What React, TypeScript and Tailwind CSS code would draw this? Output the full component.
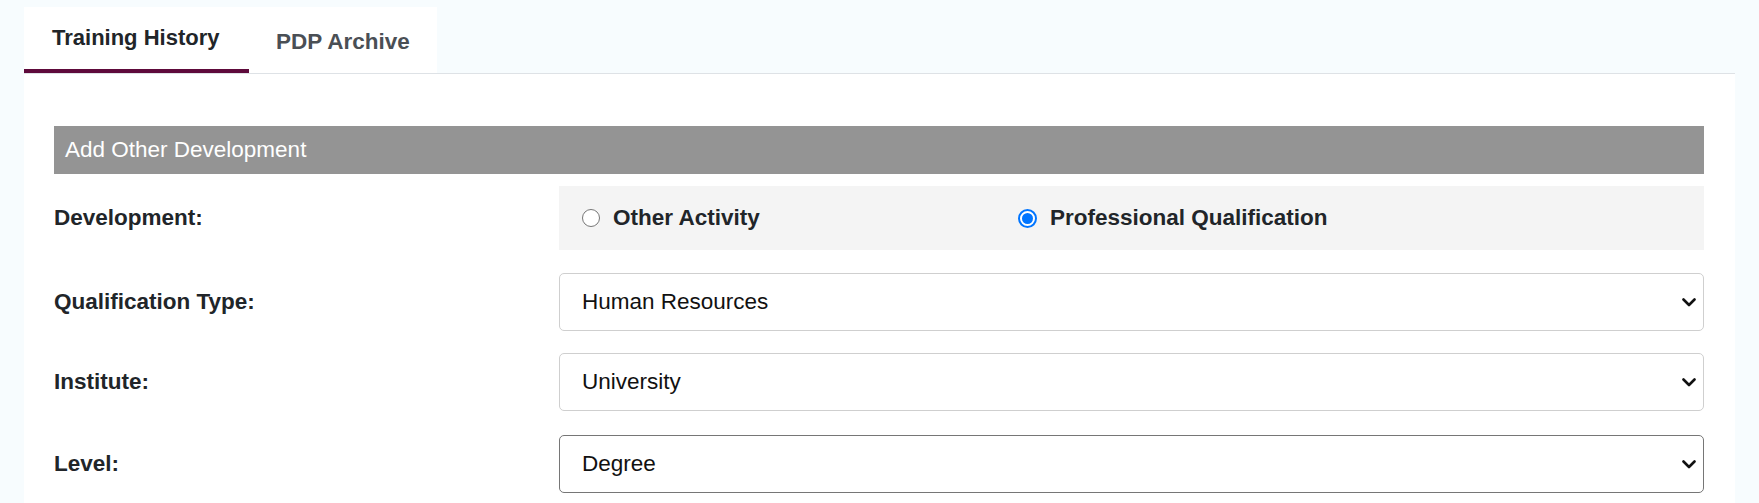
import React from "react";

const font = { fontFamily: '"Liberation Sans", Arial, sans-serif' };

function Chevron() {
  return (
    <svg width="14" height="9" viewBox="0 0 14 9" className="shrink-0">
      <polyline points="1.5,1.5 7,7 12.5,1.5" fill="none" stroke="#111" strokeWidth="2.6" strokeLinecap="round" strokeLinejoin="round" />
    </svg>
  );
}

function SelectBox({ value, dark }: { value: string; dark?: boolean }) {
  return (
    <div
      className={
        "flex h-[58px] flex-1 items-center justify-between rounded-[5px] border bg-white pl-[22px] pr-[7px] " +
        (dark ? "border-[#767676]" : "border-[#cfcfcf]")
      }
    >
      <span className="text-[22.5px] leading-[26px] text-[#111]">{value}</span>
      <Chevron />
    </div>
  );
}

function Label({ children }: { children: React.ReactNode }) {
  return (
    <div className="w-[505px] shrink-0 text-[22.5px] font-bold leading-[26px] text-[#212529]">{children}</div>
  );
}

export default function App() {
  return (
    <div style={font} className="flex h-[503px] w-full flex-col bg-[#f7fcfe] px-[24px] pt-[7px]">
      <div className="flex h-[67px] shrink-0 border-b border-[#dee2e6]">
        <div className="h-[66px] w-[225px] border-b-4 border-[#5e0a3b] bg-white px-[28px] pt-[18px] text-[22px] font-bold leading-[26px] text-[#212529]">
          Training History
        </div>
        <div className="h-[66px] w-[188px] bg-white px-[27px] pt-[22px] text-[22.5px] font-bold leading-[26px] text-[#4a4f55]">
          PDP Archive
        </div>
      </div>
      <div className="flex flex-1 flex-col bg-white pl-[30px] pr-[31px] pt-[52px]">
        <div className="flex h-[48px] items-center bg-[#949494] pl-[11px] text-[22.5px] leading-[26px] text-white">
          Add Other Development
        </div>
        <div className="mt-[12px] flex items-center">
          <Label>Development:</Label>
          <div className="flex h-[64px] flex-1 items-center bg-[#f4f4f4] pl-[23px]">
            <div className="flex w-[436px] items-center gap-[13px]">
              <span className="h-[18px] w-[18px] rounded-full border border-[#767676] bg-white" />
              <span className="text-[22.5px] font-bold leading-[26px] text-[#212529]">Other Activity</span>
            </div>
            <div className="flex items-center gap-[13px]">
              <span className="flex h-[19px] w-[19px] items-center justify-center rounded-full border-2 border-[#0075ff] bg-white">
                <span className="h-[11px] w-[11px] rounded-full bg-[#0075ff]" />
              </span>
              <span className="text-[22.5px] font-bold leading-[26px] text-[#212529]">Professional Qualification</span>
            </div>
          </div>
        </div>
        <div className="mt-[23px] flex items-center">
          <Label>Qualification Type:</Label>
          <SelectBox value="Human Resources" />
        </div>
        <div className="mt-[22px] flex items-center">
          <Label>Institute:</Label>
          <SelectBox value="University" />
        </div>
        <div className="mt-[24px] flex items-center">
          <Label>Level:</Label>
          <SelectBox value="Degree" dark />
        </div>
      </div>
    </div>
  );
}
